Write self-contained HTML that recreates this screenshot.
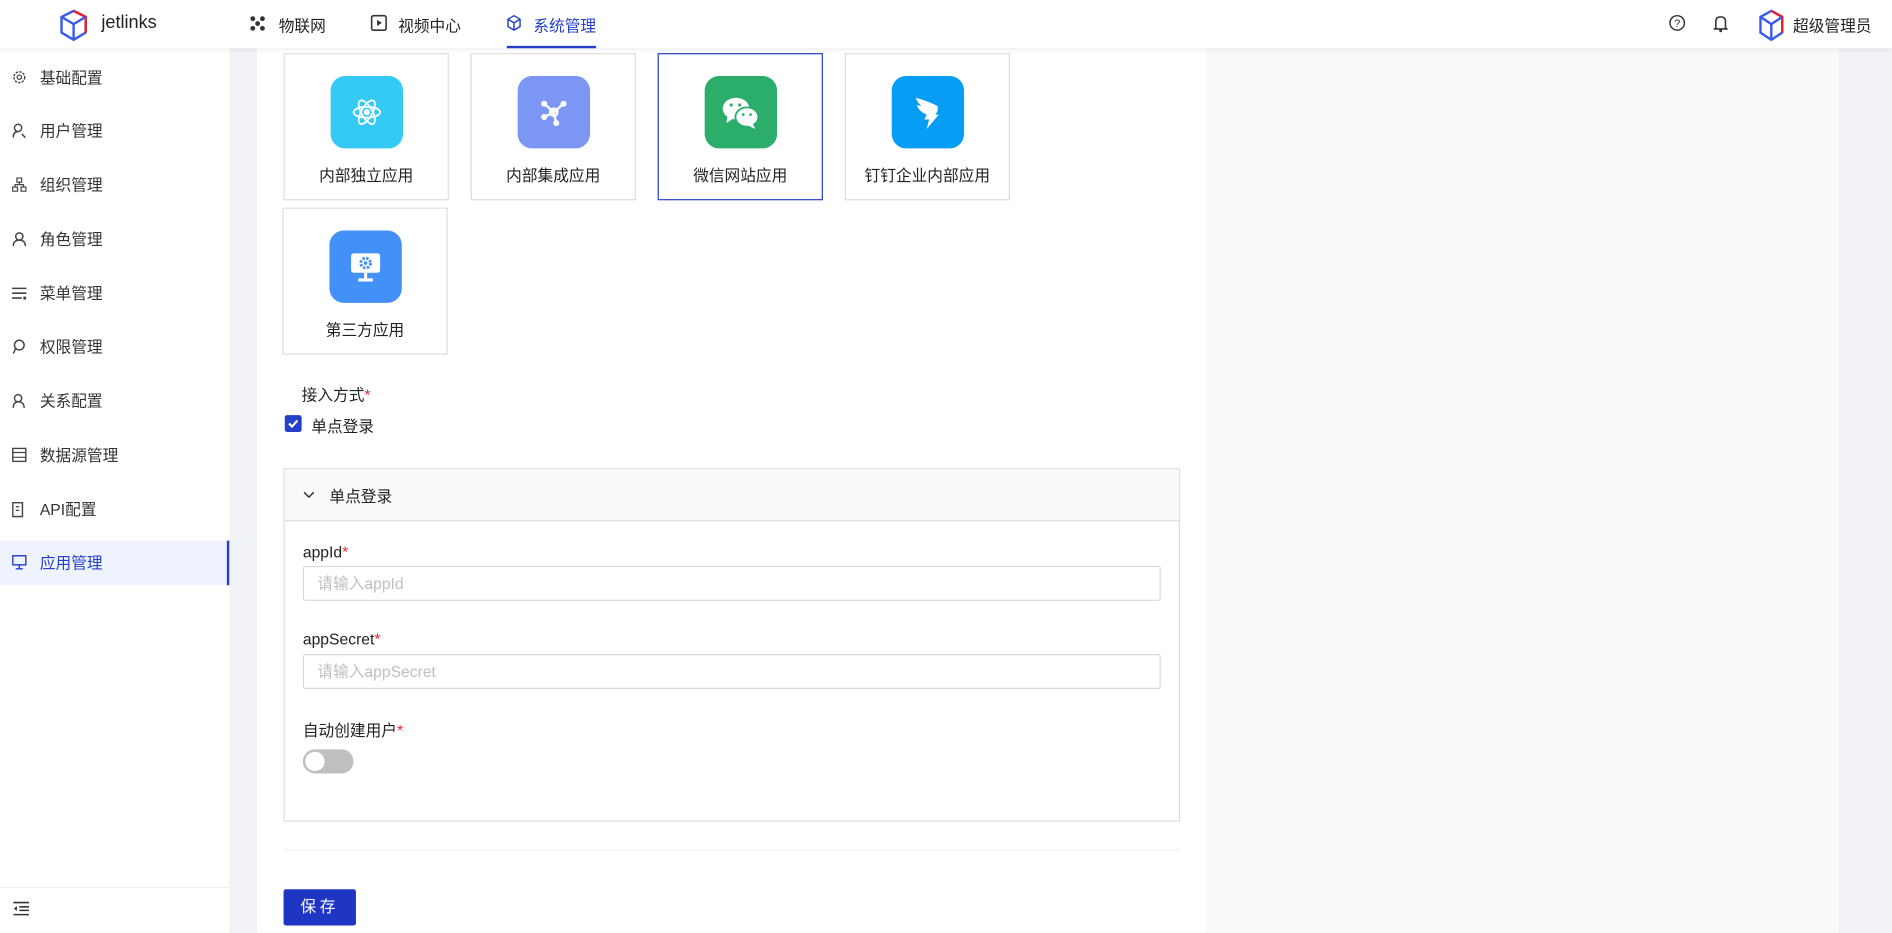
<!DOCTYPE html>
<html><head><meta charset="utf-8"><style>
*{margin:0;padding:0;box-sizing:border-box}
html,body{width:1892px;height:933px;overflow:hidden;background:#f0f2f5}
body{font-family:"Liberation Sans","Noto Sans CJK SC",sans-serif;color:#222}
#s{position:absolute;left:0;top:0;width:1568px;height:773px;transform:scale(1.20663);transform-origin:0 0;background:#f0f2f5;font-size:13px}
.a{position:absolute}
.hdr{left:0;top:0;width:1568px;height:40px;background:#fff;box-shadow:0 1px 4px rgba(0,0,0,.08);z-index:2}
.side{left:0;top:40px;width:190px;height:733px;background:#fff}
.it{position:absolute;left:0;width:190px;height:37px;line-height:37px;padding-left:33px;font-size:13px;color:#333}
.it svg{position:absolute;left:10px;top:12px}
.card{position:absolute;width:137px;height:122px;border:1px solid #ddd;background:#fff;text-align:center}
.card .ic{width:60px;height:60px;border-radius:12px;margin:18px auto 0;display:flex;align-items:center;justify-content:center}
.card .t{margin-top:12px;font-size:13px;color:#222}
.lbl{position:absolute;font-size:13px;color:#222}
.lbl b{color:#f5222d;font-weight:normal}
.inp{position:absolute;left:251px;width:711px;height:29px;border:1px solid #d9d9d9;border-radius:2px;padding-left:11px;line-height:27px;color:#bfbfbf;font-size:13px}
</style></head><body><div id="s">
<div class="a hdr">
 <svg class="a" style="left:47px;top:8px" width="28" height="26" viewBox="0 0 28 26"><path d="M4 6 L14 1 L24 6 L24 19 L14 25 L4 19Z" fill="none" stroke="#3a5ae8" stroke-width="2"/><path d="M14 1 L24 6 L24 19" fill="none" stroke="#e8202a" stroke-width="2"/><path d="M4 6 L14 12 L24 6 M14 12 L14 25" stroke="#3a5ae8" stroke-width="2" fill="none"/></svg>
 <div class="a" style="left:84px;top:10px;font-size:15px;color:#222">jetlinks</div>
 <svg class="a" style="left:207px;top:13px" width="13" height="13" viewBox="0 0 13 13"><g fill="#333"><circle cx="2.5" cy="2.5" r="2"/><circle cx="10.5" cy="2.5" r="2"/><circle cx="2.5" cy="10.5" r="2"/><circle cx="10.5" cy="10.5" r="2"/><circle cx="6.5" cy="6.5" r="2"/></g></svg>
 <div class="a" style="left:231px;top:11px;font-size:13px">物联网</div>
 <svg class="a" style="left:307px;top:12px" width="14" height="14" viewBox="0 0 14 14"><rect x="1" y="1" width="12" height="12" rx="1.5" fill="none" stroke="#333" stroke-width="1.3"/><path d="M5.5 4.5 L9.5 7 L5.5 9.5Z" fill="#333"/></svg>
 <div class="a" style="left:330px;top:11px;font-size:13px">视频中心</div>
 <svg class="a" style="left:420px;top:12px" width="12" height="14" viewBox="0 0 12 14"><path d="M6 1 L11 4 L11 10 L6 13 L1 10 L1 4Z M1 4 L6 7 L11 4 M6 7 L6 13" fill="none" stroke="#2440c9" stroke-width="1.2"/></svg>
 <div class="a" style="left:442px;top:11px;font-size:13px;color:#2440c9">系统管理</div>
 <div class="a" style="left:420px;top:38px;width:74px;height:2px;background:#2440c9"></div>
 <svg class="a" style="left:1383px;top:12px" width="14" height="14" viewBox="0 0 14 14"><circle cx="7" cy="7" r="6" fill="none" stroke="#333" stroke-width="1.2"/><text x="7" y="10.5" font-size="9" text-anchor="middle" fill="#333" font-family="Liberation Sans">?</text></svg>
 <svg class="a" style="left:1420px;top:12px" width="12" height="15" viewBox="0 0 12 15"><path d="M2 11 L2 6 Q2 2 6 2 Q10 2 10 6 L10 11 L11 12 L1 12Z" fill="none" stroke="#333" stroke-width="1.3"/><circle cx="6" cy="13.5" r="1.2" fill="#333"/></svg>
 <svg class="a" style="left:1456px;top:8px" width="24" height="26" viewBox="0 0 24 26"><path d="M3 6 L12 1 L21 6 L21 19 L12 25 L3 19Z" fill="none" stroke="#3a5ae8" stroke-width="2"/><path d="M12 1 L21 6 L21 19" fill="none" stroke="#e8202a" stroke-width="2"/><path d="M3 6 L12 12 L21 6 M12 12 L12 25" stroke="#3a5ae8" stroke-width="2" fill="none"/></svg>
 <div class="a" style="left:1486px;top:11px;font-size:13px">超级管理员</div>
</div>
<div class="a side">
 <div class="it" style="top:6px"><svg width="12" height="12" viewBox="0 0 12 12"><circle cx="6" cy="6" r="4.5" fill="none" stroke="#444" stroke-width="1.2" stroke-dasharray="2 1"/><circle cx="6" cy="6" r="1.8" fill="none" stroke="#444"/></svg>基础配置</div>
 <div class="it" style="top:50px"><svg width="12" height="13" viewBox="0 0 12 13"><circle cx="5" cy="4" r="3" fill="none" stroke="#444" stroke-width="1.2"/><path d="M1 12 Q1 7 5 7 M8 9 L11 12" fill="none" stroke="#444" stroke-width="1.2"/></svg>用户管理</div>
 <div class="it" style="top:95px"><svg width="12" height="12" viewBox="0 0 12 12"><rect x="4" y="0.5" width="4" height="3.5" fill="none" stroke="#444"/><rect x="0.5" y="8" width="4" height="3.5" fill="none" stroke="#444"/><rect x="7.5" y="8" width="4" height="3.5" fill="none" stroke="#444"/><path d="M6 4 V6 M2.5 8 V6 H9.5 V8" fill="none" stroke="#444"/></svg>组织管理</div>
 <div class="it" style="top:140px"><svg width="12" height="13" viewBox="0 0 12 13"><circle cx="6" cy="4" r="3" fill="none" stroke="#444" stroke-width="1.2"/><path d="M1 12 Q1 7 6 7 Q11 7 11 12" fill="none" stroke="#444" stroke-width="1.2"/></svg>角色管理</div>
 <div class="it" style="top:185px"><svg width="12" height="12" viewBox="0 0 12 12"><path d="M0 2 H12 M0 6 H12 M0 10 H8" stroke="#444" stroke-width="1.3"/><circle cx="10.5" cy="10" r="1.3" fill="#444"/></svg>菜单管理</div>
 <div class="it" style="top:229px"><svg width="12" height="13" viewBox="0 0 12 13"><circle cx="6" cy="5" r="4" fill="none" stroke="#444" stroke-width="1.2"/><path d="M1 12 L3 8" stroke="#444" stroke-width="1.2"/></svg>权限管理</div>
 <div class="it" style="top:274px"><svg width="12" height="13" viewBox="0 0 12 13"><circle cx="5" cy="4" r="3" fill="none" stroke="#444" stroke-width="1.2"/><path d="M1 12 Q1 7 5 7 Q10 7 10 12" fill="none" stroke="#444" stroke-width="1.2"/></svg>关系配置</div>
 <div class="it" style="top:319px"><svg width="12" height="12" viewBox="0 0 12 12"><rect x="0.6" y="0.6" width="10.8" height="10.8" fill="none" stroke="#444" stroke-width="1.2"/><path d="M0 4 H12 M0 8 H12" stroke="#444"/></svg>数据源管理</div>
 <div class="it" style="top:364px"><svg width="11" height="13" viewBox="0 0 11 13"><rect x="0.6" y="0.6" width="8" height="11.5" fill="none" stroke="#444" stroke-width="1.2"/><path d="M3 4 H6 M3 7 H6" stroke="#444"/></svg>API配置</div>
 <div class="it" style="top:408px;background:#eef3ff;color:#2440c9;border-right:2px solid #2440c9"><svg width="12" height="12" viewBox="0 0 12 12"><rect x="0.6" y="0.6" width="10.8" height="7.5" fill="none" stroke="#2440c9" stroke-width="1.2"/><path d="M6 8 V11 M3 11.4 H9" stroke="#2440c9" stroke-width="1.2"/></svg>应用管理</div>
 <div class="a" style="left:0;top:695px;width:190px;height:1px;background:#eee"></div>
 <svg class="a" style="left:11px;top:707px" width="13" height="12" viewBox="0 0 13 12"><path d="M0 1 H13 M5 4.5 H13 M5 7.5 H13 M0 11 H13" stroke="#333" stroke-width="1.3"/><path d="M3 4 L0.5 6 L3 8Z" fill="#333"/></svg>
</div>
<div class="a" style="left:213px;top:40px;width:787px;height:733px;background:#fff"></div>
<div class="a" style="left:1000px;top:40px;width:524px;height:733px;background:#f9f9f9"></div>
<div class="card" style="left:235px;top:44px"><div class="ic" style="background:#35c9f6"><svg width="26" height="26" viewBox="0 0 26 26" fill="none" stroke="#fff" stroke-width="1.5"><ellipse cx="13" cy="13" rx="11" ry="4.5"/><ellipse cx="13" cy="13" rx="11" ry="4.5" transform="rotate(60 13 13)"/><ellipse cx="13" cy="13" rx="11" ry="4.5" transform="rotate(-60 13 13)"/><circle cx="13" cy="13" r="1.8" fill="#fff"/></svg></div><div class="t">内部独立应用</div></div>
<div class="card" style="left:390px;top:44px"><div class="ic" style="background:#7b96f3"><svg width="26" height="26" viewBox="0 0 26 26"><g stroke="#fff" stroke-width="2" fill="none"><path d="M5 6 L13 13 L21 6 M13 13 L5 17 M13 13 L15 22"/><circle cx="13" cy="13" r="3"/></g><g fill="#fff"><circle cx="5" cy="6" r="2.5"/><circle cx="21" cy="6" r="2.5"/><circle cx="5" cy="17" r="2.5"/><circle cx="15" cy="22" r="2.5"/></g></svg></div><div class="t">内部集成应用</div></div>
<div class="card" style="left:545px;top:44px;border-color:#2440c9"><div class="ic" style="background:#2bae6a"><svg width="34" height="30" viewBox="0 0 34 30"><ellipse cx="13" cy="12" rx="11" ry="9" fill="#fff"/><path d="M6 18 L5 24 L11 20Z" fill="#fff"/><ellipse cx="22" cy="19" rx="9.5" ry="8" fill="#fff" stroke="#2bae6a" stroke-width="1.5"/><path d="M27 25 L29 29 L23 26Z" fill="#fff"/><g fill="#2bae6a"><circle cx="9" cy="9" r="1.3"/><circle cx="16" cy="9" r="1.3"/><circle cx="19" cy="17" r="1.1"/><circle cx="25" cy="17" r="1.1"/></g></svg></div><div class="t">微信网站应用</div></div>
<div class="card" style="left:700px;top:44px"><div class="ic" style="background:#069ef4"><svg width="26" height="30" viewBox="0 0 26 30"><path d="M3 3 Q14 6 21 10 Q22 14 19 17 L22 17 L12 29 L14 21 L10 21 L12 17 Q5 14 4 9 L8 10 Q4 7 3 3Z" fill="#fff"/></svg></div><div class="t">钉钉企业内部应用</div></div>
<div class="card" style="left:234px;top:172px;width:137px"><div class="ic" style="background:#4391f8"><svg width="28" height="26" viewBox="0 0 28 26"><rect x="2" y="2" width="24" height="16" rx="2" fill="#fff"/><path d="M14 18 V23 M8 24 H20" stroke="#fff" stroke-width="2.5"/><circle cx="14" cy="10" r="4" fill="none" stroke="#4391f8" stroke-width="2.5" stroke-dasharray="2 1.2"/><circle cx="14" cy="10" r="1.5" fill="#4391f8"/></svg></div><div class="t">第三方应用</div></div>
<div class="lbl" style="left:250px;top:317px">接入方式<b>*</b></div>
<div class="a" style="left:236px;top:344px;width:14px;height:14px;background:#2440c9;border-radius:2px"><svg width="14" height="14" viewBox="0 0 14 14"><path d="M3.5 7 L6 9.5 L10.5 4.5" stroke="#fff" stroke-width="1.8" fill="none"/></svg></div>
<div class="lbl" style="left:258px;top:343px">单点登录</div>
<div class="a" style="left:235px;top:388px;width:743px;height:293px;border:1px solid #ddd;background:#fff"></div>
<div class="a" style="left:236px;top:389px;width:741px;height:43px;background:#fafafa;border-bottom:1px solid #ddd"></div>
<svg class="a" style="left:251px;top:405px" width="10" height="10" viewBox="0 0 10 10"><path d="M1 3 L5 7 L9 3" stroke="#333" stroke-width="1.2" fill="none"/></svg>
<div class="lbl" style="left:273px;top:401px">单点登录</div>
<div class="lbl" style="left:251px;top:450px">appId<b>*</b></div>
<div class="inp" style="top:469px">请输入appId</div>
<div class="lbl" style="left:251px;top:522px">appSecret<b>*</b></div>
<div class="inp" style="top:542px">请输入appSecret</div>
<div class="lbl" style="left:251px;top:595px">自动创建用户<b>*</b></div>
<div class="a" style="left:251px;top:621px;width:42px;height:20px;border-radius:10px;background:#bfbfbf"><div class="a" style="left:2px;top:2px;width:16px;height:16px;border-radius:8px;background:#fff"></div></div>
<div class="a" style="left:235px;top:704px;width:743px;height:1px;background:#eee"></div>
<div class="a" style="left:235px;top:737px;width:60px;height:30px;background:#1f36c4;border-radius:2px;color:#fff;text-align:center;line-height:30px;font-size:13px;letter-spacing:3px">保存</div>
</div></body></html>
